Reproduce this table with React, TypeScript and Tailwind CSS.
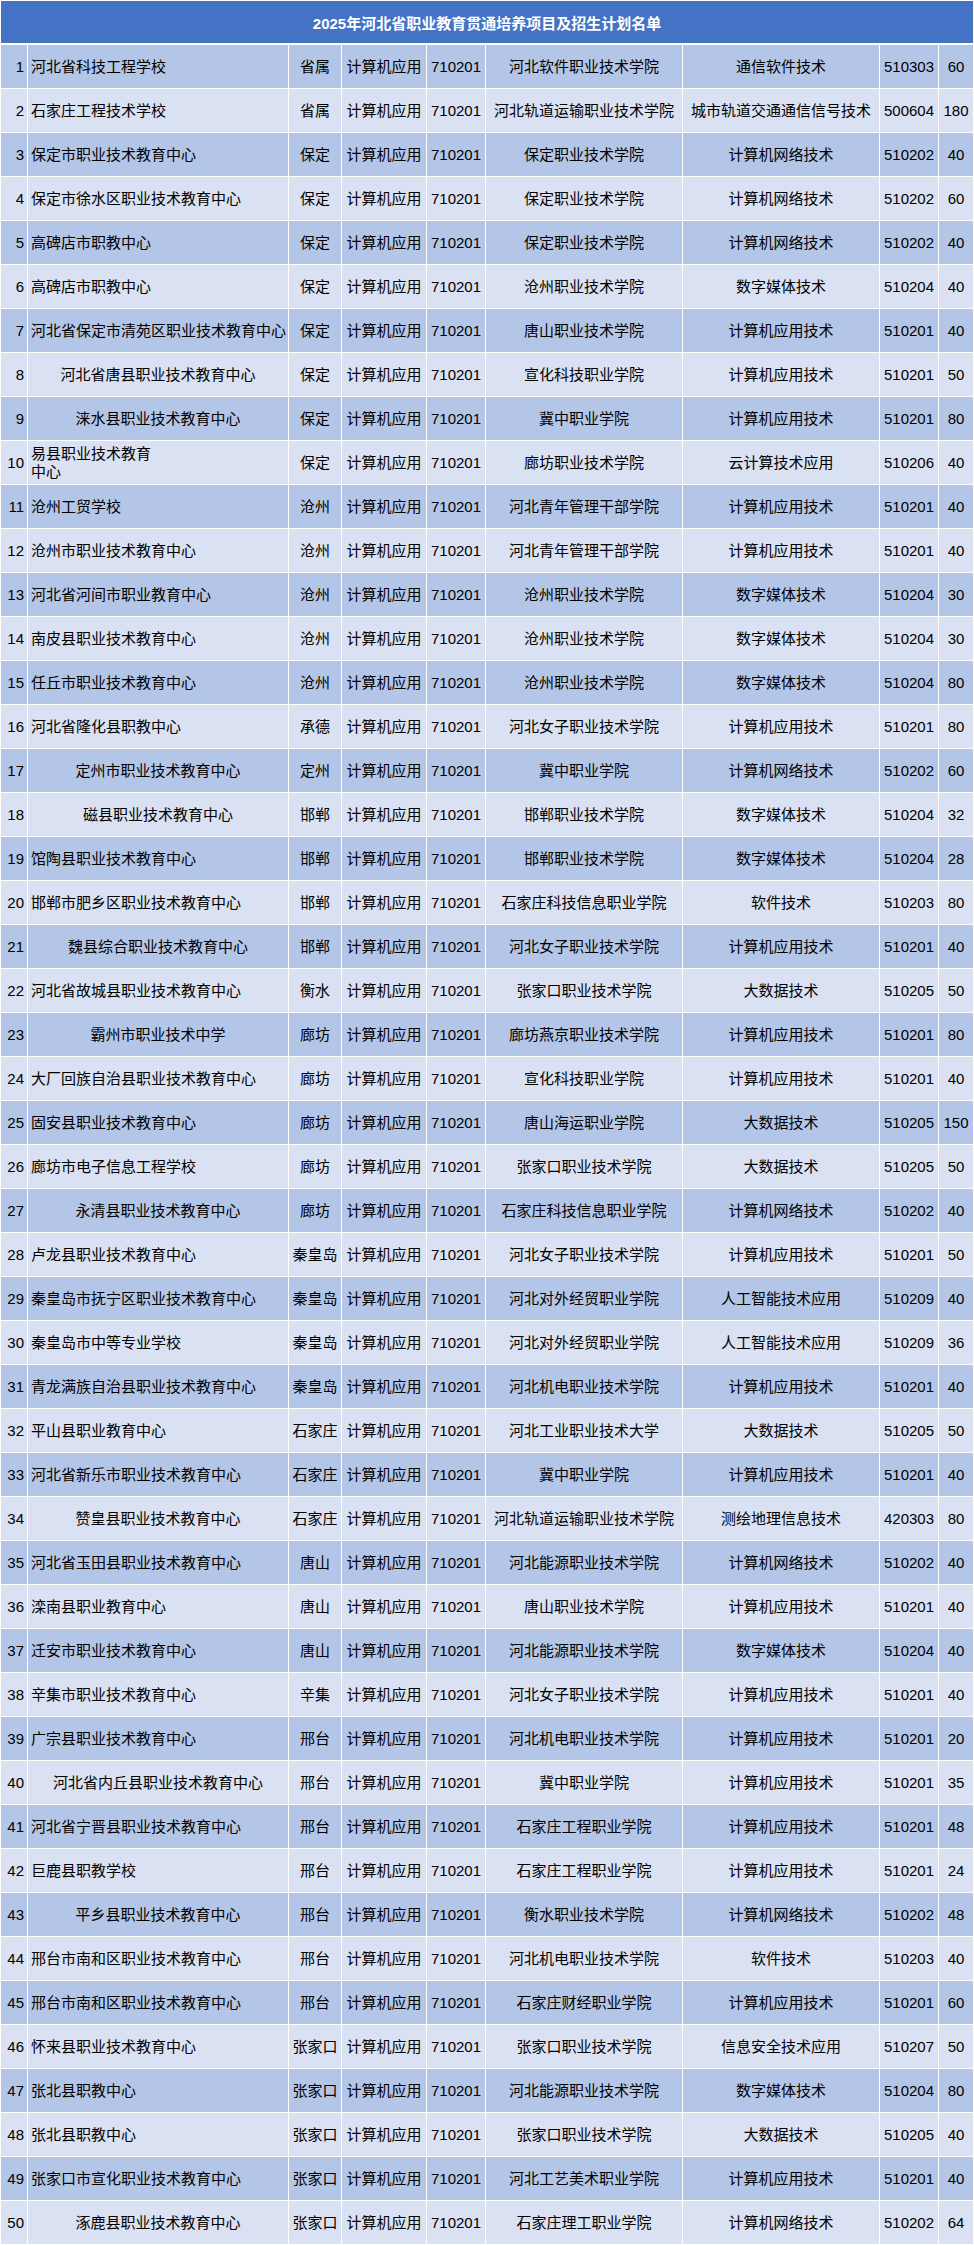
type Row = {
  no: number;
  school: string;
  center?: boolean;
  region: string;
  college: string;
  major: string;
  code: string;
  plan: number;
};

const rows: Row[] = [
  { no: 1, school: '河北省科技工程学校', region: '省属', college: '河北软件职业技术学院', major: '通信软件技术', code: '510303', plan: 60 },
  { no: 2, school: '石家庄工程技术学校', region: '省属', college: '河北轨道运输职业技术学院', major: '城市轨道交通通信信号技术', code: '500604', plan: 180 },
  { no: 3, school: '保定市职业技术教育中心', region: '保定', college: '保定职业技术学院', major: '计算机网络技术', code: '510202', plan: 40 },
  { no: 4, school: '保定市徐水区职业技术教育中心', region: '保定', college: '保定职业技术学院', major: '计算机网络技术', code: '510202', plan: 60 },
  { no: 5, school: '高碑店市职教中心', region: '保定', college: '保定职业技术学院', major: '计算机网络技术', code: '510202', plan: 40 },
  { no: 6, school: '高碑店市职教中心', region: '保定', college: '沧州职业技术学院', major: '数字媒体技术', code: '510204', plan: 40 },
  { no: 7, school: '河北省保定市清苑区职业技术教育中心', region: '保定', college: '唐山职业技术学院', major: '计算机应用技术', code: '510201', plan: 40 },
  { no: 8, school: '河北省唐县职业技术教育中心', center: true, region: '保定', college: '宣化科技职业学院', major: '计算机应用技术', code: '510201', plan: 50 },
  { no: 9, school: '涞水县职业技术教育中心', center: true, region: '保定', college: '冀中职业学院', major: '计算机应用技术', code: '510201', plan: 80 },
  { no: 10, school: '易县职业技术教育\n中心', region: '保定', college: '廊坊职业技术学院', major: '云计算技术应用', code: '510206', plan: 40 },
  { no: 11, school: '沧州工贸学校', region: '沧州', college: '河北青年管理干部学院', major: '计算机应用技术', code: '510201', plan: 40 },
  { no: 12, school: '沧州市职业技术教育中心', region: '沧州', college: '河北青年管理干部学院', major: '计算机应用技术', code: '510201', plan: 40 },
  { no: 13, school: '河北省河间市职业教育中心', region: '沧州', college: '沧州职业技术学院', major: '数字媒体技术', code: '510204', plan: 30 },
  { no: 14, school: '南皮县职业技术教育中心', region: '沧州', college: '沧州职业技术学院', major: '数字媒体技术', code: '510204', plan: 30 },
  { no: 15, school: '任丘市职业技术教育中心', region: '沧州', college: '沧州职业技术学院', major: '数字媒体技术', code: '510204', plan: 80 },
  { no: 16, school: '河北省隆化县职教中心', region: '承德', college: '河北女子职业技术学院', major: '计算机应用技术', code: '510201', plan: 80 },
  { no: 17, school: '定州市职业技术教育中心', center: true, region: '定州', college: '冀中职业学院', major: '计算机网络技术', code: '510202', plan: 60 },
  { no: 18, school: '磁县职业技术教育中心', center: true, region: '邯郸', college: '邯郸职业技术学院', major: '数字媒体技术', code: '510204', plan: 32 },
  { no: 19, school: '馆陶县职业技术教育中心', region: '邯郸', college: '邯郸职业技术学院', major: '数字媒体技术', code: '510204', plan: 28 },
  { no: 20, school: '邯郸市肥乡区职业技术教育中心', region: '邯郸', college: '石家庄科技信息职业学院', major: '软件技术', code: '510203', plan: 80 },
  { no: 21, school: '魏县综合职业技术教育中心', center: true, region: '邯郸', college: '河北女子职业技术学院', major: '计算机应用技术', code: '510201', plan: 40 },
  { no: 22, school: '河北省故城县职业技术教育中心', region: '衡水', college: '张家口职业技术学院', major: '大数据技术', code: '510205', plan: 50 },
  { no: 23, school: '霸州市职业技术中学', center: true, region: '廊坊', college: '廊坊燕京职业技术学院', major: '计算机应用技术', code: '510201', plan: 80 },
  { no: 24, school: '大厂回族自治县职业技术教育中心', region: '廊坊', college: '宣化科技职业学院', major: '计算机应用技术', code: '510201', plan: 40 },
  { no: 25, school: '固安县职业技术教育中心', region: '廊坊', college: '唐山海运职业学院', major: '大数据技术', code: '510205', plan: 150 },
  { no: 26, school: '廊坊市电子信息工程学校', region: '廊坊', college: '张家口职业技术学院', major: '大数据技术', code: '510205', plan: 50 },
  { no: 27, school: '永清县职业技术教育中心', center: true, region: '廊坊', college: '石家庄科技信息职业学院', major: '计算机网络技术', code: '510202', plan: 40 },
  { no: 28, school: '卢龙县职业技术教育中心', region: '秦皇岛', college: '河北女子职业技术学院', major: '计算机应用技术', code: '510201', plan: 50 },
  { no: 29, school: '秦皇岛市抚宁区职业技术教育中心', region: '秦皇岛', college: '河北对外经贸职业学院', major: '人工智能技术应用', code: '510209', plan: 40 },
  { no: 30, school: '秦皇岛市中等专业学校', region: '秦皇岛', college: '河北对外经贸职业学院', major: '人工智能技术应用', code: '510209', plan: 36 },
  { no: 31, school: '青龙满族自治县职业技术教育中心', region: '秦皇岛', college: '河北机电职业技术学院', major: '计算机应用技术', code: '510201', plan: 40 },
  { no: 32, school: '平山县职业教育中心', region: '石家庄', college: '河北工业职业技术大学', major: '大数据技术', code: '510205', plan: 50 },
  { no: 33, school: '河北省新乐市职业技术教育中心', region: '石家庄', college: '冀中职业学院', major: '计算机应用技术', code: '510201', plan: 40 },
  { no: 34, school: '赞皇县职业技术教育中心', center: true, region: '石家庄', college: '河北轨道运输职业技术学院', major: '测绘地理信息技术', code: '420303', plan: 80 },
  { no: 35, school: '河北省玉田县职业技术教育中心', region: '唐山', college: '河北能源职业技术学院', major: '计算机网络技术', code: '510202', plan: 40 },
  { no: 36, school: '滦南县职业教育中心', region: '唐山', college: '唐山职业技术学院', major: '计算机应用技术', code: '510201', plan: 40 },
  { no: 37, school: '迁安市职业技术教育中心', region: '唐山', college: '河北能源职业技术学院', major: '数字媒体技术', code: '510204', plan: 40 },
  { no: 38, school: '辛集市职业技术教育中心', region: '辛集', college: '河北女子职业技术学院', major: '计算机应用技术', code: '510201', plan: 40 },
  { no: 39, school: '广宗县职业技术教育中心', region: '邢台', college: '河北机电职业技术学院', major: '计算机应用技术', code: '510201', plan: 20 },
  { no: 40, school: '河北省内丘县职业技术教育中心', center: true, region: '邢台', college: '冀中职业学院', major: '计算机应用技术', code: '510201', plan: 35 },
  { no: 41, school: '河北省宁晋县职业技术教育中心', region: '邢台', college: '石家庄工程职业学院', major: '计算机应用技术', code: '510201', plan: 48 },
  { no: 42, school: '巨鹿县职教学校', region: '邢台', college: '石家庄工程职业学院', major: '计算机应用技术', code: '510201', plan: 24 },
  { no: 43, school: '平乡县职业技术教育中心', center: true, region: '邢台', college: '衡水职业技术学院', major: '计算机网络技术', code: '510202', plan: 48 },
  { no: 44, school: '邢台市南和区职业技术教育中心', region: '邢台', college: '河北机电职业技术学院', major: '软件技术', code: '510203', plan: 40 },
  { no: 45, school: '邢台市南和区职业技术教育中心', region: '邢台', college: '石家庄财经职业学院', major: '计算机应用技术', code: '510201', plan: 60 },
  { no: 46, school: '怀来县职业技术教育中心', region: '张家口', college: '张家口职业技术学院', major: '信息安全技术应用', code: '510207', plan: 50 },
  { no: 47, school: '张北县职教中心', region: '张家口', college: '河北能源职业技术学院', major: '数字媒体技术', code: '510204', plan: 80 },
  { no: 48, school: '张北县职教中心', region: '张家口', college: '张家口职业技术学院', major: '大数据技术', code: '510205', plan: 40 },
  { no: 49, school: '张家口市宣化职业技术教育中心', region: '张家口', college: '河北工艺美术职业学院', major: '计算机应用技术', code: '510201', plan: 40 },
  { no: 50, school: '涿鹿县职业技术教育中心', center: true, region: '张家口', college: '石家庄理工职业学院', major: '计算机网络技术', code: '510202', plan: 64 },
];

const cell = 'h-[43px] flex items-center whitespace-nowrap';

export default function App() {
  return (
    <div
      className="w-[974px] bg-white p-px text-[15px] leading-[18px] text-black"
      style={{ fontFamily: '"Liberation Sans", "Noto Sans CJK SC", sans-serif' }}
    >
      <div className="h-[42px] mb-[2px] bg-[#4472C4] flex items-center justify-center pt-[3px] text-white font-bold">
        2025年河北省职业教育贯通培养项目及招生计划名单
      </div>
      <div className="grid grid-cols-[26px_260px_52px_84px_58px_196px_196px_58px_34px] gap-px">
        {rows.map(r => {
          const bg = r.no % 2 === 1 ? 'bg-[#B4C6E7]' : 'bg-[#D9E1F2]';
          return (
            <div key={r.no} className="contents">
              <div className={`${cell} ${bg} justify-end pr-[3px]`}>{r.no}</div>
              <div className={`${cell} ${bg} px-[3px] ${r.center ? 'justify-center' : 'justify-start'}`}>
                <span className="whitespace-pre">{r.school}</span>
              </div>
              <div className={`${cell} ${bg} justify-center`}>{r.region}</div>
              <div className={`${cell} ${bg} justify-center`}>计算机应用</div>
              <div className={`${cell} ${bg} justify-center`}>710201</div>
              <div className={`${cell} ${bg} justify-center`}>{r.college}</div>
              <div className={`${cell} ${bg} justify-center`}>{r.major}</div>
              <div className={`${cell} ${bg} justify-center`}>{r.code}</div>
              <div className={`${cell} ${bg} justify-center`}>{r.plan}</div>
            </div>
          );
        })}
      </div>
    </div>
  );
}
